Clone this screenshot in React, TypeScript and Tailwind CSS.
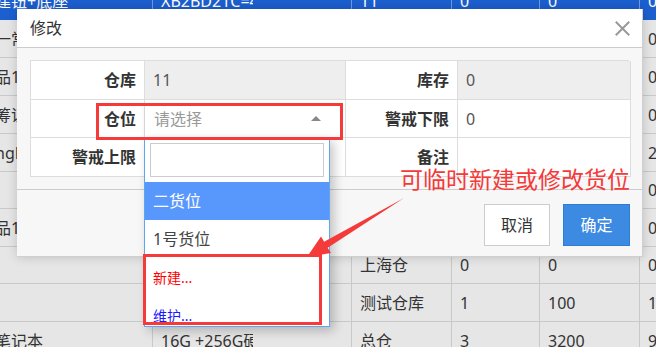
import React from 'react';

const bgRows = [
  { h: 'h-[38px]', blue: true, c: ['建钮+底座', 'XB2BD21C=4', '11', '0', '0', '0'] },
  { h: 'h-[38px]', c: ['一常用', '', '', '', '', '0'] },
  { h: 'h-[38px]', c: ['品1', '', '', '', '', '0'] },
  { h: 'h-[38px]', c: ['筹证', '', '', '', '', '0'] },
  { h: 'h-[38px]', c: ['ngP', '', '', '', '', '2'] },
  { h: 'h-[37px]', c: ['', '', '', '', '', '0'] },
  { h: 'h-[38px]', c: ['品1', '', '', '', '', '0'] },
  { h: 'h-[37px]', c: ['', '', '上海仓', '0', '0', '0'] },
  { h: 'h-[38px]', c: ['', '', '测试仓库', '1', '100', '100'] },
  { h: 'h-[38px]', c: ['笔记本', '16G +256G硬盘', '总仓', '3', '3200', '9'] },
];

const colW = ['w-[153px]', 'w-[199px]', 'w-[100px]', 'w-[88px]', 'w-[100px]', 'flex-1'];

export default function App() {
  return (
    <div className="relative w-[656px] h-[347px] overflow-hidden bg-[#e6e6e6] text-[#333] font-['Noto_Sans','Noto_Sans_CJK_SC',sans-serif]">
      {/* page table behind the mask */}
      <div className="-mt-[18px]">
        {bgRows.map((r, i) => (
          <div
            key={i}
            className={`flex border-b ${r.h} ${r.blue ? 'bg-[#1c5fcf] text-white border-[#1c5fcf]' : 'border-[#c9c9c9]'}`}
          >
            {r.c.map((t, j) => (
              <div
                key={j}
                className={`${colW[j]} flex items-center overflow-hidden whitespace-nowrap text-[16px] ${j < 5 ? (r.blue ? 'border-r border-[#6f9be3]' : 'border-r border-[#c9c9c9]') : ''} ${j === 0 ? 'pl-0' : 'pl-2'}`}
              >
                <span className={j === 0 ? '-ml-[5px]' : j === 1 ? 'max-w-[92px] overflow-hidden' : ''}>{t}</span>
              </div>
            ))}
          </div>
        ))}
      </div>

      {/* Modal */}
      <div className="absolute left-[17px] top-[9px] w-[626px] h-[248px] bg-[#f7f7f7] border-r border-b border-[#cfcfcf] shadow-[0_0_10px_rgba(0,0,0,0.18)] flex flex-col">
        <div className="h-[39px] bg-white border-b border-[#cccccc] flex items-center justify-between pl-[13px] pr-[12px]">
          <span className="text-[16px] text-[#333]">修改</span>
          <svg width="15" height="15" viewBox="0 0 15 15" className="mt-[1px]">
            <path d="M1.5 1.5 L13.5 13.5 M13.5 1.5 L1.5 13.5" stroke="#999" strokeWidth="2" strokeLinecap="square" />
          </svg>
        </div>

        <div className="pt-[12px] pb-[12px] px-[13px] border-b border-[#cccccc]">
          <div className="grid grid-cols-[114px_201px_112px_173px] border-t border-l border-[#dddddd] text-[16px]">
            <div className="h-[39px] bg-white border-r border-b border-[#dddddd] flex items-center justify-end pr-2 font-bold">仓库</div>
            <div className="h-[39px] bg-[#eeeeee] border-r border-b border-[#dddddd] flex items-center pl-2 text-[#555]">11</div>
            <div className="h-[39px] bg-white border-r border-b border-[#dddddd] flex items-center justify-end pr-2 font-bold">库存</div>
            <div className="h-[39px] bg-[#eeeeee] border-r border-b border-[#dddddd] flex items-center pl-2 text-[#555]">0</div>

            <div className="h-[38px] bg-white border-r border-b border-[#dddddd] flex items-center justify-end pr-2 font-bold">仓位</div>
            <div className="h-[38px] bg-white border-r border-b border-[#dddddd] flex items-center justify-between pl-[9px] pr-[24px] shadow-[0_3px_6px_rgba(0,0,0,0.08)]">
              <span className="text-[#999]">请选择</span>
              <span className="w-0 h-0 border-l-[5px] border-r-[5px] border-b-[5px] border-l-transparent border-r-transparent border-b-[#888]" />
            </div>
            <div className="h-[38px] bg-white border-r border-b border-[#dddddd] flex items-center justify-end pr-2 font-bold">警戒下限</div>
            <div className="h-[38px] bg-white border-r border-b border-[#dddddd] flex items-center pl-2 text-[#555]">0</div>

            <div className="h-[39px] bg-white border-r border-b border-[#dddddd] flex items-center justify-end pr-2 font-bold">警戒上限</div>
            <div className="h-[39px] bg-white border-r border-b border-[#dddddd]" />
            <div className="h-[39px] bg-white border-r border-b border-[#dddddd] flex items-center justify-end pr-2 font-bold">备注</div>
            <div className="h-[39px] bg-white border-r border-b border-[#dddddd]" />
          </div>
        </div>

        <div className="flex-1 flex justify-end items-start pt-[14px] pr-[12px] gap-[13px]">
          <button className="w-[66px] h-[42px] bg-white border border-[#cccccc] text-[16px] text-[#333]">取消</button>
          <button className="w-[67px] h-[42px] bg-[#3d8ae2] border border-[#2f7cd6] text-[16px] text-white">确定</button>
        </div>
      </div>

      {/* Select dropdown */}
      <div className="absolute left-[144px] top-[137px] w-[186px] h-[190px] bg-white border border-[#5ea6ef] overflow-hidden shadow-[4px_4px_10px_rgba(0,0,0,0.22)]">
        <div className="p-[5px]">
          <div className="h-[34px] border border-[#cccccc] bg-white" />
        </div>
        <div className="h-[38px] bg-[#5897fb] text-white text-[16px] flex items-center pl-[8px]">二货位</div>
        <div className="h-[38px] text-[#444] text-[16px] flex items-center pl-[8px]">1号货位</div>
        <div className="h-[38px] text-[#ff0000] text-[14px] flex items-center pl-[8px]">新建...</div>
        <div className="h-[38px] text-[#1a1aff] text-[14px] flex items-center pl-[8px]">维护...</div>
      </div>

      {/* annotations */}
      <div className="absolute left-[96px] top-[103px] w-[247px] h-[37px] border-[3px] border-[#f53a3a]" />
      <div className="absolute left-[143px] top-[254px] w-[179px] h-[71px] border-[3px] border-[#f53a3a]" />
      <div className="absolute left-[400px] top-[163px] text-[23px] leading-[32px] text-[#f53a3a] whitespace-nowrap">可临时新建或修改货位</div>
      <svg className="absolute left-0 top-0" width="656" height="347" viewBox="0 0 656 347">
        <polygon
          points="404,198 327.7,247.7 331,253 307,257 321,236.5 324.1,241.7"
          fill="#f53a3a"
        />
      </svg>
    </div>
  );
}
